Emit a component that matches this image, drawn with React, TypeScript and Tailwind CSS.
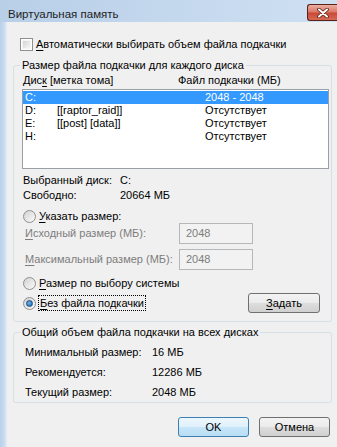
import type { ReactNode } from 'react';

const drives = [
  { drive: 'C:', label: '', size: '2048 - 2048', selected: true },
  { drive: 'D:', label: '[[raptor_raid]]', size: 'Отсутствует', selected: false },
  { drive: 'E:', label: '[[post] [data]]', size: 'Отсутствует', selected: false },
  { drive: 'H:', label: '', size: 'Отсутствует', selected: false },
];

function U({ children }: { children: ReactNode }) {
  return <span className="underline decoration-1 underline-offset-[2px]">{children}</span>;
}

function Checkbox() {
  return (
    <div className="w-[13px] h-[13px] shrink-0 border border-[#8f8f8f] bg-white p-[1px]">
      <div className="w-full h-full bg-gradient-to-br from-[#d4d4d4] to-[#f7f7f7] border border-[#f4f4f4]" />
    </div>
  );
}

function Radio({ checked = false }: { checked?: boolean }) {
  return (
    <div className="w-[13px] h-[13px] shrink-0 rounded-full border border-[#8e8f8f] bg-gradient-to-br from-[#d2d2d2] to-[#fbfbfb] flex items-center justify-center">
      {checked && (
        <div className="w-[7px] h-[7px] rounded-full bg-[radial-gradient(circle_at_40%_40%,#6bb6f2,#1b5e9e)] border border-[#1a4d80]" />
      )}
    </div>
  );
}

function Button({ children, primary = false, className = '' }: { children: ReactNode; primary?: boolean; className?: string }) {
  return (
    <div
      className={
        'h-[20px] shrink-0 rounded-[3px] border flex items-center justify-center text-black ' +
        (primary
          ? 'border-[#3c7fb1] bg-[linear-gradient(#eef7fd_0%,#dff0fb_50%,#c7e6f9_51%,#b9ddf3_100%)] '
          : 'border-[#707070] bg-[linear-gradient(#f3f3f3_0%,#ebebeb_50%,#dddddd_51%,#d0d0d0_100%)] ') +
        className
      }
    >
      {children}
    </div>
  );
}

function DisabledInput({ value }: { value: string }) {
  return (
    <div className="w-[74px] h-[21px] shrink-0 border border-[#b5b8bb] bg-[#f2f2f2] pl-[6px] flex items-center text-[#7d7d7d]">
      {value}
    </div>
  );
}

export default function App() {
  return (
    <div className="w-[337px] h-[447px] overflow-hidden whitespace-nowrap bg-[linear-gradient(90deg,#b8cfe8,#cfe0f2)] font-['Liberation_Sans',Arial,sans-serif] text-[11px] text-black flex flex-col">
      {/* title bar */}
      <div className="h-[22px] flex justify-between shrink-0">
        <div className="pl-[8px] pt-[6px] leading-[16px] text-[11.5px] text-[#1e1e1e]">Виртуальная память</div>
        <div className="mt-[4px] w-[30px] h-[17px] rounded-l-[3px] border border-r-0 border-[#5b2119] bg-[linear-gradient(#eab0a2_0%,#dc7a69_45%,#c94a38_55%,#d66a52_100%)] flex items-center justify-center">
          <svg width="12" height="10" viewBox="0 0 12 10">
            <path d="M2 1.5 L10 8.5 M10 1.5 L2 8.5" stroke="#5a2119" strokeWidth="3.6" strokeLinecap="round" />
            <path d="M2 1.5 L10 8.5 M10 1.5 L2 8.5" stroke="#ffffff" strokeWidth="2" strokeLinecap="round" />
          </svg>
        </div>
      </div>

      {/* body */}
      <div className="flex flex-1">
        <div className="w-[7px] shrink-0 bg-[linear-gradient(90deg,#b9d0ea,#c8dbef_60%,#e4edf7)]" />
        <div className="flex-1 bg-[#f0f0f0] flex flex-col">
          {/* auto checkbox */}
          <div className="mt-[15px] h-[15px] pl-[13px] flex items-center gap-[3px] leading-[15px]">
            <Checkbox />
            <span>
              <U>А</U>втоматически выбирать объем файла подкачки
            </span>
          </div>

          {/* group 1 */}
          <fieldset className="mt-[6px] ml-[6px] mr-[5px] border border-[#d5dfe5] rounded-[3px] pb-[8px]">
            <legend className="ml-[6px] px-[2px] leading-[15px]">Размер файла подкачки для каждого диска</legend>

            <div className="h-[15px] pl-[9px] flex leading-[15px]">
              <span className="w-[155px] shrink-0">
                Дис<U>к</U> [метка тома]
              </span>
              <span>Файл подкачки (МБ)</span>
            </div>

            <div className="mt-[1px] ml-[8px] mr-[2px] h-[80px] border border-[#9a9ea5] bg-white pt-[1px]">
              {drives.map((d) => (
                <div
                  key={d.drive}
                  className={'h-[13px] leading-[13px] pl-[2px] flex ' + (d.selected ? 'bg-[#3399ff] text-white' : '')}
                >
                  <span className="w-[32px] shrink-0">{d.drive}</span>
                  <span className="w-[148px] shrink-0">{d.label}</span>
                  <span>{d.size}</span>
                </div>
              ))}
            </div>

            <div className="mt-[4px] pl-[9px] leading-[15px]">
              <div className="h-[15px] flex">
                <span className="w-[97px] shrink-0">Выбранный диск:</span>
                <span>C:</span>
              </div>
              <div className="h-[15px] flex">
                <span className="w-[97px] shrink-0">Свободно:</span>
                <span>20664 МБ</span>
              </div>
            </div>

            <div className="mt-[6px] h-[14px] pl-[9px] flex items-center gap-[3px]">
              <Radio />
              <span>
                <U>У</U>казать размер:
              </span>
            </div>

            <div className="h-[21px] flex items-center pl-[11px]">
              <span className="w-[154px] shrink-0 text-[#7d7d7d]">
                <U>И</U>сходный размер (МБ):
              </span>
              <DisabledInput value="2048" />
            </div>

            <div className="mt-[5px] h-[21px] flex items-center pl-[11px]">
              <span className="w-[154px] shrink-0 text-[#7d7d7d]">
                <U>М</U>аксимальный размер (МБ):
              </span>
              <DisabledInput value="2048" />
            </div>

            <div className="mt-[6px] h-[14px] pl-[9px] flex items-center gap-[3px]">
              <Radio />
              <span>
                <U>Р</U>азмер по выбору системы
              </span>
            </div>

            <div className="mt-[3px] h-[20px] pl-[9px] pr-[11px] flex items-center justify-between">
              <div className="flex items-center gap-[2px]">
                <Radio checked />
                <span className="border border-dotted border-black px-[1px] leading-[14px]">
                  <U>Б</U>ез файла подкачки
                </span>
              </div>
              <Button className="w-[72px]">
                <U>З</U>адать
              </Button>
            </div>
          </fieldset>

          {/* group 2 */}
          <fieldset className="mt-[3px] ml-[6px] mr-[5px] border border-[#d5dfe5] rounded-[3px]">
            <legend className="ml-[6px] px-[2px] leading-[15px]">Общий объем файла подкачки на всех дисках</legend>
            <div className="mt-[2px] pl-[11px]">
              <div className="h-[20px] flex items-center">
                <span className="w-[127px] shrink-0">Минимальный размер:</span>
                <span>16 МБ</span>
              </div>
              <div className="h-[20px] flex items-center">
                <span className="w-[127px] shrink-0">Рекомендуется:</span>
                <span>12286 МБ</span>
              </div>
              <div className="h-[20px] flex items-center">
                <span className="w-[127px] shrink-0">Текущий размер:</span>
                <span>2048 МБ</span>
              </div>
            </div>
          </fieldset>

          {/* dialog buttons */}
          <div className="mt-[14px] pr-[7px] flex justify-end gap-[10px]">
            <Button primary className="w-[71px]">
              OK
            </Button>
            <Button className="w-[71px]">Отмена</Button>
          </div>
        </div>
      </div>
    </div>
  );
}
